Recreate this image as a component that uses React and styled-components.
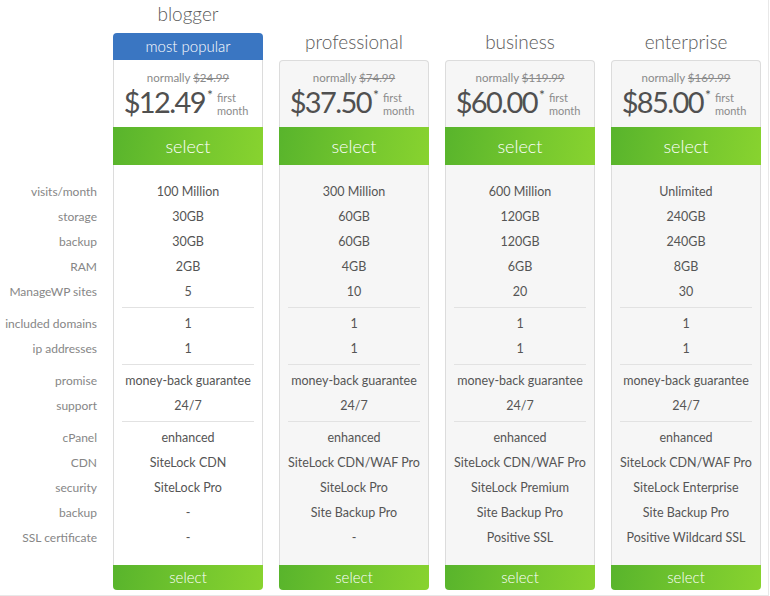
import React from "react";
import styled, { createGlobalStyle } from "styled-components";

const GlobalStyle = createGlobalStyle`
  html, body {
    margin: 0;
    padding: 0;
    background: #fff;
  }
  body {
    font-family: Lato, "Open Sans", sans-serif;
    color: #555;
  }
`;

const labels = [
  ["visits/month", "storage", "backup", "RAM", "ManageWP sites"],
  ["included domains", "ip addresses"],
  ["promise", "support"],
  ["cPanel", "CDN", "security", "backup", "SSL certificate"],
];

const plans = [
  {
    name: "blogger",
    featured: true,
    was: "$24.99",
    price: "$12.49",
    groups: [
      ["100 Million", "30GB", "30GB", "2GB", "5"],
      ["1", "1"],
      ["money-back guarantee", "24/7"],
      ["enhanced", "SiteLock CDN", "SiteLock Pro", "-", "-"],
    ],
  },
  {
    name: "professional",
    was: "$74.99",
    price: "$37.50",
    groups: [
      ["300 Million", "60GB", "60GB", "4GB", "10"],
      ["1", "1"],
      ["money-back guarantee", "24/7"],
      ["enhanced", "SiteLock CDN/WAF Pro", "SiteLock Pro", "Site Backup Pro", "-"],
    ],
  },
  {
    name: "business",
    was: "$119.99",
    price: "$60.00",
    groups: [
      ["600 Million", "120GB", "120GB", "6GB", "20"],
      ["1", "1"],
      ["money-back guarantee", "24/7"],
      ["enhanced", "SiteLock CDN/WAF Pro", "SiteLock Premium", "Site Backup Pro", "Positive SSL"],
    ],
  },
  {
    name: "enterprise",
    was: "$169.99",
    price: "$85.00",
    groups: [
      ["Unlimited", "240GB", "240GB", "8GB", "30"],
      ["1", "1"],
      ["money-back guarantee", "24/7"],
      ["enhanced", "SiteLock CDN/WAF Pro", "SiteLock Enterprise", "Site Backup Pro", "Positive Wildcard SSL"],
    ],
  },
];

// head 60 + price 67 + select 38 + features padding 14
const FEATURES_TOP = 179;

const Page = styled.div`
  box-sizing: border-box;
  width: 769px;
  height: 596px;
  border-right: 1px solid #e8e8e8;
  border-bottom: 1px solid #e8e8e8;
  display: grid;
  grid-template-columns: 97px repeat(4, 150px);
  column-gap: 16px;
  align-items: start;
`;

const LabelColumn = styled.div`
  padding-top: ${FEATURES_TOP}px;
  text-align: right;
`;

const Column = styled.div`
  display: flex;
  flex-direction: column;
`;

const PlanHead = styled.div`
  height: 60px;
  display: flex;
  flex-direction: column;
  justify-content: flex-end;
`;

const Title = styled.div`
  font-size: 19px;
  font-weight: 300;
  line-height: 28px;
  text-align: center;
  color: #5a5a5a;
  margin-bottom: ${(p) => (p.$featured ? "5px" : "4px")};
`;

const Badge = styled.div`
  height: 27px;
  line-height: 27px;
  background: #3a76c2;
  color: #fff;
  font-size: 15px;
  font-weight: 300;
  text-align: center;
  border-radius: 4px 4px 0 0;
`;

const PriceBox = styled.div`
  box-sizing: border-box;
  height: 67px;
  padding-top: ${(p) => (p.$featured ? "10px" : "9px")};
  background: ${(p) => (p.$featured ? "#fff" : "#f6f6f6")};
  border: 1px solid #dcdcdc;
  border-top-width: ${(p) => (p.$featured ? "0" : "1px")};
  border-bottom: none;
  border-radius: ${(p) => (p.$featured ? "0" : "4px 4px 0 0")};
  text-align: center;
`;

const Normally = styled.div`
  font-size: 11.5px;
  line-height: 15px;
  color: #8a8a8a;
`;

const PriceRow = styled.div`
  display: flex;
  justify-content: center;
  align-items: flex-start;
  margin-left: -4px;
`;

const Amount = styled.span`
  font-size: 29px;
  line-height: 34px;
  letter-spacing: -1.6px;
  color: #505050;
`;

const Star = styled.span`
  font-size: 14px;
  line-height: 20px;
  color: #505050;
  margin-left: 2px;
`;

const FirstMonth = styled.span`
  font-size: 11px;
  line-height: 13px;
  color: #8b8b8b;
  text-align: left;
  margin-left: 4px;
  padding-top: 6px;
`;

const SelectButton = styled.div`
  height: ${(p) => (p.$small ? "25px" : "38px")};
  line-height: ${(p) => (p.$small ? "25px" : "38px")};
  font-size: ${(p) => (p.$small ? "15px" : "18px")};
  font-weight: 300;
  color: #fff;
  text-align: center;
  background: linear-gradient(100deg, #58b42c 0%, #74c62e 55%, #88d32f 100%);
  border-radius: ${(p) => (p.$small ? "0 0 4px 4px" : "0")};
  cursor: pointer;
`;

const Features = styled.div`
  padding: 14px 8px 15px;
  background: ${(p) => (p.$featured ? "#fff" : "#f6f6f6")};
  border-left: 1px solid #dcdcdc;
  border-right: 1px solid #dcdcdc;
  text-align: center;
`;

const Group = styled.div`
  padding-bottom: 3px;
  margin-bottom: 3px;
  border-bottom: 1px solid ${(p) => (p.$hidden ? "transparent" : "#e2e2e2")};

  &:last-child {
    padding-bottom: 0;
    margin-bottom: 0;
    border-bottom: none;
  }
`;

const Row = styled.div`
  height: 25px;
  line-height: 25px;
  font-size: ${(p) => (p.$label ? "12px" : "12.5px")};
  white-space: nowrap;
  color: ${(p) => (p.$label ? "#868686" : "#555")};
`;

function Plan({ plan }) {
  const { featured } = plan;
  return (
    <Column>
      <PlanHead>
        <Title $featured={featured}>{plan.name}</Title>
        {featured && <Badge>most popular</Badge>}
      </PlanHead>
      <PriceBox $featured={featured}>
        <Normally>
          normally <s>{plan.was}</s>
        </Normally>
        <PriceRow>
          <Amount>{plan.price}</Amount>
          <Star>*</Star>
          <FirstMonth>
            first
            <br />
            month
          </FirstMonth>
        </PriceRow>
      </PriceBox>
      <SelectButton>select</SelectButton>
      <Features $featured={featured}>
        {plan.groups.map((g, i) => (
          <Group key={i}>
            {g.map((v, j) => (
              <Row key={j}>{v}</Row>
            ))}
          </Group>
        ))}
      </Features>
      <SelectButton $small>select</SelectButton>
    </Column>
  );
}

export default function App() {
  return (
    <>
      <GlobalStyle />
      <Page>
        <LabelColumn>
          {labels.map((g, i) => (
            <Group key={i} $hidden>
              {g.map((l, j) => (
                <Row key={j} $label>
                  {l}
                </Row>
              ))}
            </Group>
          ))}
        </LabelColumn>
        {plans.map((p) => (
          <Plan key={p.name} plan={p} />
        ))}
      </Page>
    </>
  );
}
